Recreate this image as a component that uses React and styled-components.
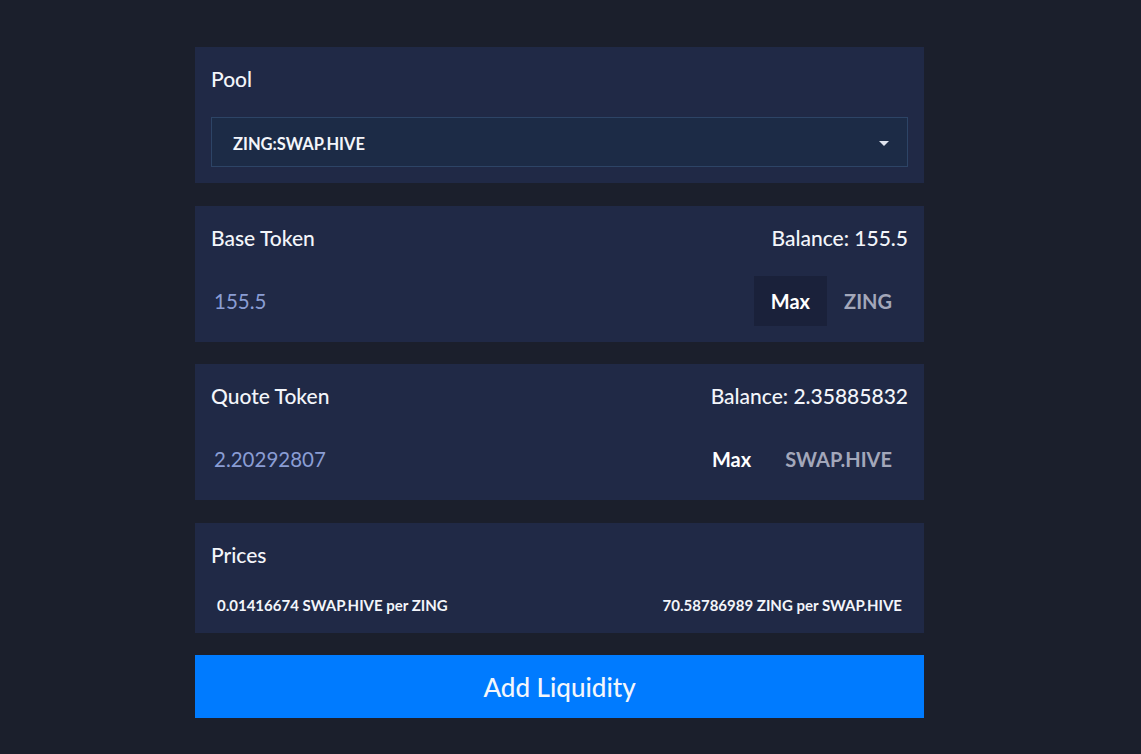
import React, { useState } from "react";
import styled, { createGlobalStyle } from "styled-components";

const GlobalStyle = createGlobalStyle`
  html, body {
    margin: 0;
    padding: 0;
    background: #1b1f2c;
    font-family: Lato, "Noto Sans", sans-serif;
    color: #f1f3f8;
  }
`;

const Page = styled.div`
  min-height: 754px;
  display: flex;
  justify-content: center;
  padding: 47px 22px 0 0;
  box-sizing: border-box;
`;

const Column = styled.div`
  width: 729px;
  display: flex;
  flex-direction: column;
  gap: 22.5px;
`;

const Card = styled.div`
  background: #202946;
  padding: 16px;
  height: ${({ h }) => h}px;
  box-sizing: border-box;
  display: flex;
  flex-direction: column;
`;

const HeadRow = styled.div`
  display: flex;
  justify-content: space-between;
  align-items: center;
  height: 31px;
  font-size: 21px;
  font-weight: 500;
  color: #f3f5fa;
`;

const SelectBox = styled.div`
  margin-top: 23px;
  height: 50px;
  border: 1px solid #2d4466;
  background: #1c2b46;
  display: flex;
  align-items: center;
  justify-content: space-between;
  padding: 3px 18px 0 21px;
  box-sizing: border-box;
  font-size: 16.5px;
  font-weight: 700;
  color: #f3f5fa;
  cursor: pointer;
`;

const Caret = styled.span`
  width: 0;
  height: 0;
  border-left: 5px solid transparent;
  border-right: 5px solid transparent;
  border-top: 5px solid #dfe3ee;
`;

const InputRow = styled.div`
  margin-top: 23px;
  display: flex;
  align-items: center;
  height: 50px;
`;

const AmountInput = styled.input`
  flex: 1;
  background: transparent;
  border: none;
  outline: none;
  font-family: inherit;
  font-size: 20.5px;
  color: #8a9dd4;
  padding: 0 0 0 3px;
`;

const MaxButton = styled.button`
  height: 50px;
  padding: 0 17px;
  border: none;
  background: ${({ active }) => (active ? "#1a213a" : "transparent")};
  color: #ffffff;
  font-family: inherit;
  font-size: 20px;
  font-weight: 700;
  cursor: pointer;
`;

const Symbol = styled.span`
  font-size: 20px;
  font-weight: 700;
  color: #a3a7ba;
  padding: 0 16px 0 17px;
`;

const PriceRow = styled.div`
  margin-top: 26px;
  display: flex;
  justify-content: space-between;
  padding: 0 6px;
  font-size: 15px;
  font-weight: 700;
  color: #f3f5fa;
`;

const SubmitButton = styled.button`
  height: 63px;
  border: none;
  background: #007bff;
  color: #f3f6fb;
  font-family: inherit;
  font-size: 26px;
  font-weight: 500;
  cursor: pointer;
`;

function TokenCard({ label, balance, value, symbol, active }) {
  const [amount, setAmount] = useState(value);
  return (
    <Card h={136}>
      <HeadRow>
        <span>{label}</span>
        <span>Balance: {balance}</span>
      </HeadRow>
      <InputRow>
        <AmountInput value={amount} onChange={e => setAmount(e.target.value)} />
        <MaxButton active={active} onClick={() => setAmount(balance)}>
          Max
        </MaxButton>
        <Symbol>{symbol}</Symbol>
      </InputRow>
    </Card>
  );
}

export default function App() {
  return (
    <>
      <GlobalStyle />
      <Page>
        <Column>
          <Card h={136}>
            <HeadRow>
              <span>Pool</span>
            </HeadRow>
            <SelectBox>
              <span>ZING:SWAP.HIVE</span>
              <Caret />
            </SelectBox>
          </Card>
          <TokenCard
            label="Base Token"
            balance="155.5"
            value="155.5"
            symbol="ZING"
            active
          />
          <TokenCard
            label="Quote Token"
            balance="2.35885832"
            value="2.20292807"
            symbol="SWAP.HIVE"
          />
          <Card h={110}>
            <HeadRow>
              <span>Prices</span>
            </HeadRow>
            <PriceRow>
              <span>0.01416674 SWAP.HIVE per ZING</span>
              <span>70.58786989 ZING per SWAP.HIVE</span>
            </PriceRow>
          </Card>
          <SubmitButton>Add Liquidity</SubmitButton>
        </Column>
      </Page>
    </>
  );
}
